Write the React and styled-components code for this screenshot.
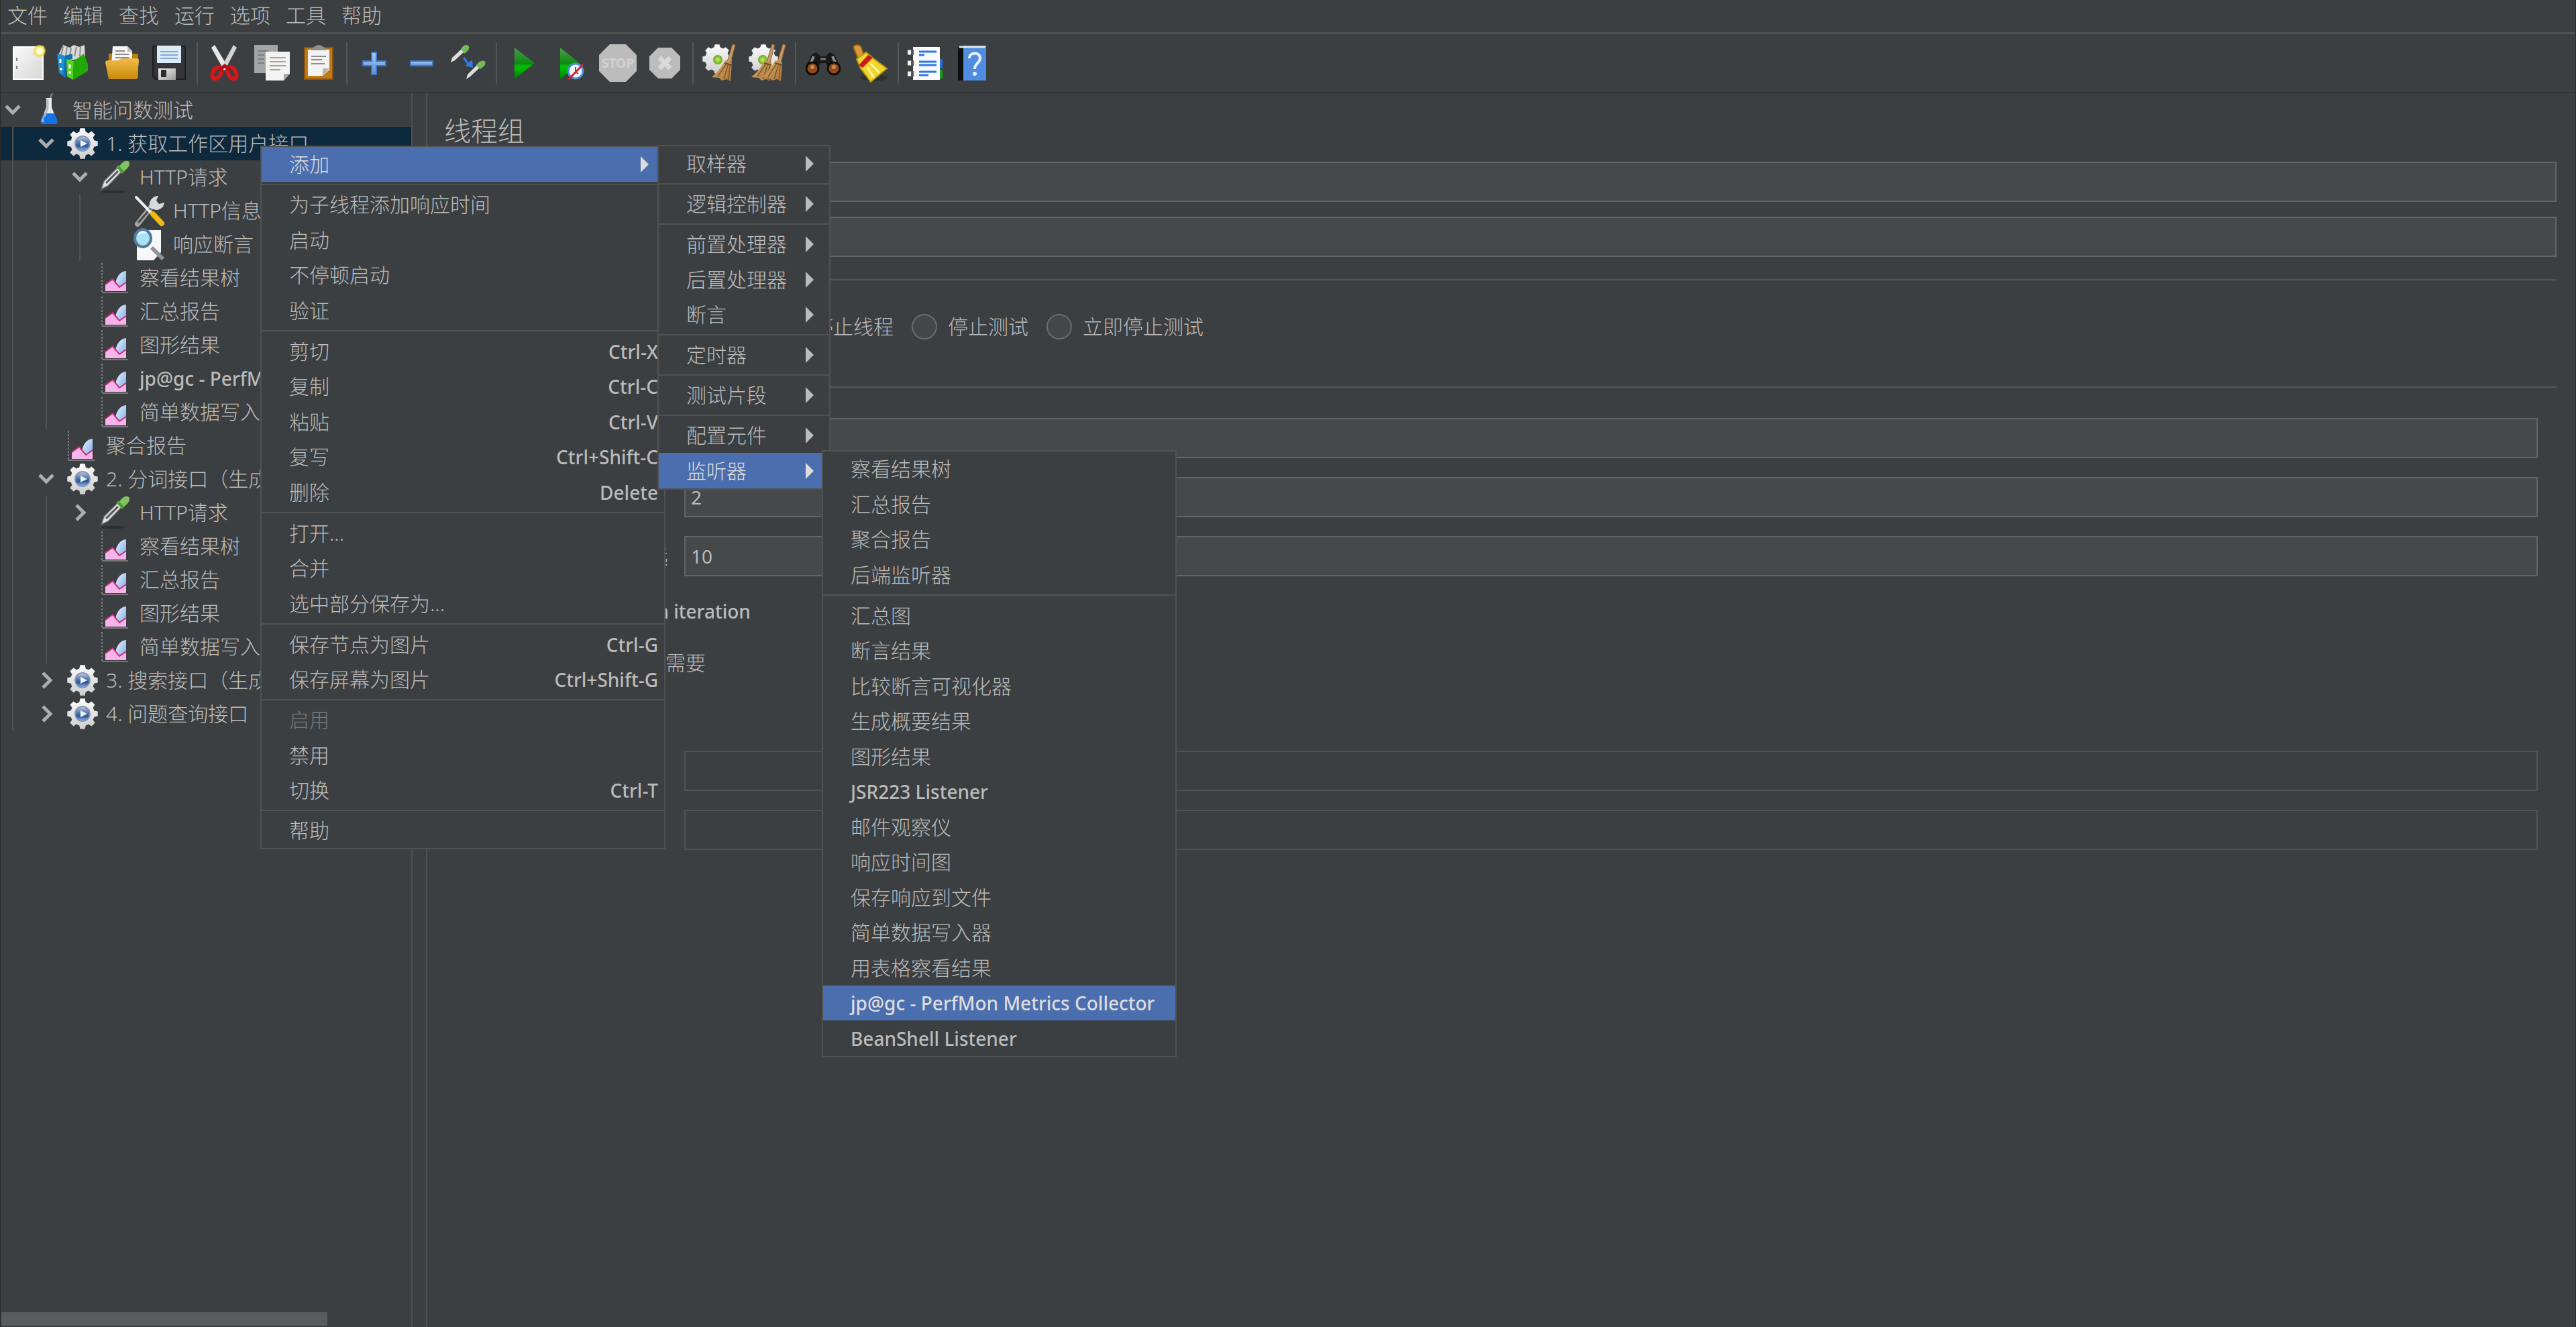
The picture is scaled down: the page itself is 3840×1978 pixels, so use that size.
// App.jsx
import React, { useState } from 'react';
import styled, { createGlobalStyle, css } from 'styled-components';

const GlobalStyle = createGlobalStyle`
  * {
    box-sizing: border-box;
  }

  body {
    margin: 0;
    background: #3c3f41;
    color: #bbbbbb;
    font-family: 'Noto Sans', 'Noto Sans CJK SC', sans-serif;
    font-size: 30px;
    font-weight: 300;
    line-height: 40px;
  }

  button,
  input {
    font: inherit;
    color: inherit;
  }

  button {
    padding: 0;
    border: 0;
    background: none;
  }
`;

const Window = styled.div`
  position: relative;
  display: flex;
  flex-direction: column;
  min-height: 100vh;
  overflow: hidden;
  border: solid #2b2b2b;
  border-width: 0 1px;
`;

// Latin-only labels are set a little smaller and heavier than the Chinese ones
const Label = styled.span`
  ${({ $latin }) =>
    $latin &&
    css`
      font-size: 28px;
      font-weight: 500;
    `}
`;

const isLatin = (text) => /^[\x20-\x7e]+$/.test(text);

/* ---------- menu bar and toolbar ---------- */

const MenuBar = styled.nav`
  display: flex;
  gap: 23px;
  height: 51px;
  padding: 2px 10px 0;
  border-bottom: 3px solid #515151;
`;

const MenuBarButton = styled.button`
  height: 42px;
`;

const ToolBar = styled.div`
  display: flex;
  align-items: center;
  height: 88px;
  padding-left: 6px;
  border-bottom: 2px solid #333638;
`;

const ToolButton = styled.button`
  display: flex;
  align-items: center;
  justify-content: center;
  width: 70px;
  height: 64px;
`;

const ToolDivider = styled.span`
  width: 2px;
  height: 63px;
  margin: 0 5px 0 6px;
  background: #555555;
`;

const Glyph = styled.svg`
  display: block;
  flex: none;
  width: ${({ $size }) => $size || 56}px;
  height: ${({ $size }) => $size || 56}px;
  overflow: visible;
`;

/* ---------- tree ---------- */

const Body = styled.div`
  display: flex;
  flex: 1;
`;

const Sidebar = styled.aside`
  display: flex;
  flex-direction: column;
  flex: none;
  width: 614px;
  overflow: hidden;
  border-right: 2px solid #515151;
`;

const Tree = styled.ul`
  flex: 1;
  margin: 0;
  padding: 0;
  list-style: none;
`;

const TreeRow = styled.li`
  display: flex;
  align-items: center;
  height: 50px;
  white-space: nowrap;
  background: ${({ $selected }) => ($selected ? '#0d293e' : 'transparent')};
`;

const Guide = styled.span`
  flex: none;
  width: 50px;
  height: 50px;

  &::before {
    content: '';
    display: block;
    width: 2px;
    height: 100%;
    margin-left: 17px;
    background: #515151;
  }
`;

const Twisty = styled.button`
  display: flex;
  align-items: center;
  justify-content: center;
  flex: none;
  width: 36px;
  height: 50px;
`;

const TreeIcon = styled.span`
  flex: none;
  margin: 0 10px 0 11px;
`;

const ScrollThumb = styled.div`
  width: 486px;
  height: 20px;
  margin: 2px 1px;
  background: #595b5d;
`;

/* ---------- editor panel ---------- */

const Panel = styled.main`
  flex: 1;
  margin-left: 20px;
  padding: 26px 28px 0 25px;
  border-left: 2px solid #515151;
`;

const Title = styled.h1`
  margin: 0 0 16px;
  font-size: 40px;
  font-weight: 300;
  line-height: 60px;
`;

const Row = styled.div`
  display: flex;
  align-items: center;
  margin-bottom: ${({ $gap }) => $gap || 28}px;
`;

const RowLabel = styled.div`
  display: flex;
  align-items: center;
  justify-content: space-between;
  flex: none;
  width: ${({ $wide }) => ($wide ? 330 : 110)}px;
  padding-right: ${({ $wide }) => ($wide ? 24 : 0)}px;
`;

const Field = styled.input`
  flex: 1;
  min-width: 0;
  height: 60px;
  padding: 0 8px;
  border: 2px solid #646464;
  border-radius: 0;
  outline: 0;
  background: #45494a;
  font-size: 28px;
  font-weight: 400;

  &:disabled {
    border-color: #515151;
    background: transparent;
  }
`;

const Section = styled.section`
  padding-bottom: ${({ $space }) => $space || 0}px;
`;

const SectionTitle = styled.h2`
  display: flex;
  align-items: center;
  gap: 8px;
  margin: 0 0 25px;
  font-size: 30px;
  font-weight: 300;
  line-height: 40px;

  &::after {
    content: '';
    flex: 1;
    height: 2px;
    background: #555555;
  }
`;

const Properties = styled.div`
  padding: 1px 28px 0;
`;

const Radios = styled.div`
  display: flex;
  gap: 27px;
  height: 50px;
  padding-left: 34px;
`;

const Choice = styled.label`
  display: flex;
  align-items: center;
  gap: ${({ $tight }) => ($tight ? 8 : 16)}px;
`;

const Radio = styled.input`
  appearance: none;
  width: 38px;
  height: 38px;
  margin: 0;
  border: 2px solid #6b6b6b;
  border-radius: 50%;
  background: #43494a;
`;

const CheckBox = styled.input`
  appearance: none;
  width: 38px;
  height: 38px;
  margin: 0;
  border: 2px solid #6b6b6b;
  background: #43494a;

  &:checked {
    background: #6b6b6b;
  }
`;

const Options = styled.div`
  padding-left: 8px;
`;

/* ---------- popup menus ---------- */

const Popup = styled.div`
  position: absolute;
  top: ${({ $top }) => $top}px;
  left: ${({ $left }) => $left}px;
  width: ${({ $width }) => $width}px;
  border: 2px solid #515151;
  background: #3c3f41;
`;

const PopupItem = styled.button`
  display: flex;
  align-items: center;
  justify-content: space-between;
  width: 100%;
  height: 52px;
  padding: 0 9px 0 41px;
  text-align: left;
  white-space: nowrap;

  &:nth-child(even) {
    height: 53px;
  }

  &:disabled {
    color: #777777;
  }

  ${({ $active }) =>
    $active &&
    css`
      background: #4b6eaf;
      color: #dddddd;
    `}
`;

const PopupDivider = styled.div`
  height: 8px;
  padding: 3px 0;
  background: #515151 content-box;
`;

const Arrow = styled.span`
  margin-right: 14px;
  border-left: 12px solid currentColor;
  border-top: 12px solid transparent;
  border-bottom: 12px solid transparent;
`;

/* ---------- drawings ---------- */

const Gradients = () => (
  <svg width="0" height="0" style={{ position: 'absolute' }} aria-hidden="true">
    <defs>
      <linearGradient id="paper" x1="0" y1="0" x2="1" y2="1">
        <stop offset="0" stopColor="#fafafa" />
        <stop offset="1" stopColor="#d6d6d6" />
      </linearGradient>
      <linearGradient id="folder" x1="0" y1="0" x2="0" y2="1">
        <stop offset="0" stopColor="#f0bb4c" />
        <stop offset="1" stopColor="#c98a08" />
      </linearGradient>
      <linearGradient id="metal" x1="0" y1="0" x2="1" y2="1">
        <stop offset="0" stopColor="#f4f4f4" />
        <stop offset="1" stopColor="#9a9a9a" />
      </linearGradient>
      <linearGradient id="cog" x1="0" y1="0" x2="0" y2="1">
        <stop offset="0" stopColor="#fbfbfb" />
        <stop offset="1" stopColor="#cdcdcd" />
      </linearGradient>
      <linearGradient id="play" x1="0" y1="0" x2="0" y2="1">
        <stop offset="0" stopColor="#4b9e4b" />
        <stop offset="0.5" stopColor="#0c8a10" />
        <stop offset="0.6" stopColor="#00c400" />
        <stop offset="1" stopColor="#007a08" />
      </linearGradient>
      <linearGradient id="sky" x1="0" y1="0" x2="1" y2="1">
        <stop offset="0" stopColor="#f4f9ff" />
        <stop offset="1" stopColor="#6ea3e8" />
      </linearGradient>
      <linearGradient id="plus" x1="0" y1="0" x2="0" y2="1">
        <stop offset="0" stopColor="#a9c9f2" />
        <stop offset="1" stopColor="#5b93dc" />
      </linearGradient>
      <linearGradient id="straw" x1="0" y1="0" x2="1" y2="1">
        <stop offset="0" stopColor="#d6ac73" />
        <stop offset="1" stopColor="#a87435" />
      </linearGradient>
      <radialGradient id="glow">
        <stop offset="0" stopColor="#ffffff" />
        <stop offset="0.5" stopColor="#fff9b0" />
        <stop offset="0.7" stopColor="#f2dc3c" />
        <stop offset="1" stopColor="#f2dc3c" stopOpacity="0" />
      </radialGradient>
      <linearGradient id="orb" x1="0" y1="0" x2="0" y2="1">
        <stop offset="0" stopColor="#c3cbd8" />
        <stop offset="0.4" stopColor="#5b7db4" />
        <stop offset="0.65" stopColor="#2c5296" />
        <stop offset="1" stopColor="#8fbaf0" />
      </linearGradient>
      <radialGradient id="lime">
        <stop offset="0" stopColor="#c8f06a" />
        <stop offset="1" stopColor="#6aa51c" />
      </radialGradient>
    </defs>
  </svg>
);

const cog = (cx, cy, inner, outer) => {
  const points = [];
  for (let i = 0; i < 8; i++) {
    [-15, -9, 9, 15].forEach((offset, k) => {
      const angle = ((i * 45 + offset) * Math.PI) / 180;
      const r = k === 0 || k === 3 ? inner : outer;
      points.push(`${(cx + r * Math.sin(angle)).toFixed(1)},${(cy - r * Math.cos(angle)).toFixed(1)}`);
    });
  }
  return points.join(' ');
};

const Dropper = () => (
  <g>
    <path d="M2 42L6 30L27 9L33 15L12 37Z" fill="#e4e4e4" stroke="#6f6f6f" strokeWidth="1.5" />
    <path d="M9 33L27 15" stroke="#555" strokeWidth="3" />
    <path d="M24 9L28 6L37 15L33 19Z" fill="#4f9e3e" />
    <path d="M29 8C33 1 40 -2 43 1C46 5 42 11 36 15Z" fill="#7cc45e" />
  </g>
);

const Broom = () => (
  <g>
    <path d="M46 0L50 1L43 27L38 26Z" fill="#c49a66" stroke="#8f6636" />
    <path d="M35 24L45 27L43 55L37 52L30 54L26 50L15 49C23 42 29 35 35 24Z" fill="url(#straw)" />
    <path d="M36 30L24 48M39 31L33 52M42 31L40 53" stroke="#855a26" strokeWidth="1.5" />
    <path d="M34 28L45 31" stroke="#6e4a1e" strokeWidth="2" />
  </g>
);

const toolIcons = {
  new: (
    <>
      <rect x="6" y="4" width="44" height="48" fill="url(#paper)" stroke="#fff" strokeWidth="2" />
      <path d="M11 20v5M11 32v5" stroke="#777" strokeWidth="2" />
      <circle cx="45" cy="10" r="10" fill="url(#glow)" />
    </>
  ),
  templates: (
    <>
      <path d="M4 14L10 1L20 5L26 1L34 4L42 1L43 20L20 24L6 24Z" fill="#d9d9d9" />
      <path d="M10 3L7 18M16 4L14 18M22 5L20 18M30 4L27 18M36 3L35 18" stroke="#8b8b8b" strokeWidth="2" />
      <path d="M1 14L13 17V50L4 42Z" fill="#1b8fd6" />
      <path d="M13 17L24 14V22L15 24V50L10 47Z" fill="#0c6fb4" />
      <path d="M15 22L26 25L25 53L16 48Z" fill="#55d321" />
      <path d="M26 25L41 14L47 30V40L25 53Z" fill="#22a907" />
      <path d="M6 22v6M20 30v6" stroke="#fff" strokeWidth="3" />
      <circle cx="7" cy="37" r="2" fill="#fff" />
      <circle cx="20" cy="42" r="2" fill="#fff" />
    </>
  ),
  open: (
    <>
      <path d="M8 14h44v36H8z" fill="#b97f08" />
      <path d="M14 3h22l7 7v20H12z" fill="#f6f6f6" />
      <path d="M36 3v8h7z" fill="#bdbdbd" />
      <path d="M18 10h14M18 15h20M18 20h20" stroke="#8e8e8e" strokeWidth="2" />
      <path d="M3 27C3 25 5 24 8 24H22L27 21H50C53 21 53 23 53 26L50 52H8Z" fill="url(#folder)" />
    </>
  ),
  save: (
    <>
      <path d="M4 3h48v49H8L4 48z" fill="#34343a" stroke="#1e1e22" strokeWidth="2" />
      <rect x="10" y="2" width="36" height="26" fill="#dcebf8" />
      <path d="M15 11h26M15 16h26M15 21h26" stroke="#86a9cc" strokeWidth="2" />
      <rect x="12" y="36" width="26" height="17" fill="url(#metal)" />
      <rect x="16" y="38" width="8" height="11" fill="#2c2c30" />
    </>
  ),
  cut: (
    <>
      <path d="M8 5L13 1L33 34L27 39Z" fill="#e9e9e9" />
      <path d="M46 5L41 1L23 34L28 39Z" fill="#d3d3d3" />
      <g fill="none" stroke="#d81518" strokeWidth="6">
        <ellipse cx="16" cy="43" rx="6" ry="9" transform="rotate(25 16 43)" />
        <ellipse cx="39" cy="43" rx="6" ry="9" transform="rotate(-25 39 43)" />
      </g>
      <path d="M20 38L28 32L36 38" fill="none" stroke="#b01010" strokeWidth="5" />
    </>
  ),
  copy: (
    <>
      <rect x="2" y="1" width="35" height="42" fill="#a2a5a5" />
      <path d="M7 10h16M7 16h10M7 22h10M7 28h10" stroke="#7b7e7e" strokeWidth="2" />
      <path d="M19 11H55V44L46 54H19Z" fill="#f3f3f1" />
      <path d="M55 44H46V54Z" fill="#a9aba6" />
      <path d="M25 20h24M25 26h24M25 32h24M25 38h16" stroke="#a4a4a4" strokeWidth="2" />
    </>
  ),
  paste: (
    <>
      <rect x="7" y="5" width="42" height="47" fill="#c07a16" stroke="#8a550b" strokeWidth="2" />
      <path d="M12 8H44V38L34 47H12Z" fill="#f3f3f1" />
      <path d="M44 36H34V47Z" fill="#b6b6b0" />
      <path d="M17 9V6C20 6 21 2 28 1C35 2 36 6 39 6V9Z" fill="#8f9189" />
      <path d="M17 18h22M17 23h16M17 29h20" stroke="#8d8d8d" strokeWidth="2" />
    </>
  ),
  expand: (
    <path
      d="M24 12h7v13h14v7H31v13h-7V32H11v-7h13z"
      fill="url(#plus)"
      stroke="#3f78c8"
      strokeWidth="2"
    />
  ),
  collapse: <path d="M12 25h33v7H12z" fill="url(#plus)" stroke="#3f78c8" strokeWidth="2" />,
  toggle: (
    <>
      <path d="M2 27L4 20L18 7L22 11L8 24Z" fill="#dedede" />
      <path d="M17 7C21 0 27 0 29 3C30 7 27 11 22 14Z" fill="#74b95a" />
      <path d="M25 52L27 45L41 31L45 35L31 48Z" fill="#dedede" />
      <path d="M40 31C44 24 51 23 53 26C55 30 51 34 45 37Z" fill="#74b95a" />
      <path d="M21 20L28 29" stroke="#2f7df0" strokeWidth="3" />
      <path d="M24 32L34 23L35 35Z" fill="#2f7df0" />
    </>
  ),
  start: <path d="M14 5L44 28L14 52Z" fill="url(#play)" />,
  startNoTimers: (
    <>
      <path d="M12 5L41 28L12 52Z" fill="url(#play)" />
      <circle cx="35" cy="40" r="11" fill="#f3f8fd" stroke="#4b8fd6" strokeWidth="3" />
      <path d="M35 34v7l4 3" fill="none" stroke="#556" strokeWidth="2" />
      <path d="M24 53L46 30" stroke="#d3202a" strokeWidth="3" />
    </>
  ),
  stop: (
    <>
      <path d="M16 0H40L56 16V40L40 56H16L0 40V16Z" fill="#bcbcbc" />
      <text x="28" y="35" textAnchor="middle" fontSize="19" fontWeight="700" fill="#d2d2d2">
        STOP
      </text>
    </>
  ),
  shutdown: (
    <>
      <path d="M18 5H38L51 18V38L38 51H18L5 38V18Z" fill="#bcbcbc" />
      <path d="M20 20L36 36M36 20L20 36" stroke="#dadada" strokeWidth="7" />
    </>
  ),
  clear: (
    <>
      <polygon points={cog(23, 22, 18, 22)} fill="url(#cog)" />
      <circle cx="24" cy="23" r="7" fill="url(#lime)" />
      <Broom />
    </>
  ),
  clearAll: (
    <>
      <polygon points={cog(22, 22, 18, 22)} fill="url(#cog)" />
      <circle cx="21" cy="23" r="7" fill="url(#lime)" />
      <g transform="translate(-11 0)">
        <Broom />
      </g>
      <g transform="translate(5 0)">
        <Broom />
      </g>
    </>
  ),
  search: (
    <>
      <path d="M11 15L18 12L24 18H32L38 12L45 15L54 36L40 42L32 28H24L16 42L2 36Z" fill="#191919" />
      <path d="M14 18L8 32M42 18L48 32" stroke="#8d8d8d" strokeWidth="4" />
      <path d="M24 22h8" stroke="#777" strokeWidth="3" />
      <circle cx="12" cy="36" r="9" fill="#8e4a1c" stroke="#0e0e0e" strokeWidth="3" />
      <circle cx="44" cy="36" r="9" fill="#8e4a1c" stroke="#0e0e0e" strokeWidth="3" />
      <circle cx="12" cy="34" r="3" fill="#d28a4a" />
      <circle cx="44" cy="34" r="3" fill="#d28a4a" />
    </>
  ),
  searchReset: (
    <>
      <ellipse cx="34" cy="50" rx="20" ry="5" fill="#2c2e30" />
      <path d="M3 5C3 0 13 -1 15 5L20 19L11 24Z" fill="#d89a3c" stroke="#8d5d15" strokeWidth="2" />
      <path d="M8 22L22 12L34 22L53 36L29 56L14 36Z" fill="#f1d62d" stroke="#b99a10" strokeWidth="2" />
      <path d="M11 31L25 16L32 20L17 35Z" fill="#cf1a1a" />
      <path d="M24 34L34 50M29 29L42 43" stroke="#fff39a" strokeWidth="3" />
    </>
  ),
  functions: (
    <>
      <rect x="44" y="22" width="9" height="14" fill="#1f6fe8" />
      <rect x="44" y="38" width="9" height="13" fill="#12a018" />
      <rect x="9" y="4" width="40" height="49" fill="#fafafa" />
      <path d="M1 12h14M1 28h14M1 44h14" stroke="#f4f4f4" strokeWidth="7" />
      <path d="M8 8v8M8 24v8M8 40v8" stroke="#555" strokeWidth="4" />
      <path d="M18 11h26M18 16h8M18 26h26M18 31h26M18 41h26M18 46h14" stroke="#2b78f0" strokeWidth="3" />
    </>
  ),
  help: (
    <>
      <path d="M6 5L14 2V54H6Z" fill="#0e0e0e" />
      <rect x="14" y="2" width="34" height="52" fill="#4f8de0" />
      <path d="M8 4H47" stroke="#e6e6e6" strokeWidth="3" />
      <path
        d="M23 21C23 11 39 11 39 21C39 28 31 28 31 37"
        fill="none"
        stroke="#eaf2ff"
        strokeWidth="4"
      />
      <circle cx="31" cy="44" r="3" fill="#eaf2ff" />
    </>
  ),
};

const treeIcons = {
  plan: (
    <>
      <path d="M25 9L29 -1" stroke="#8c8c8c" strokeWidth="2" />
      <path d="M20 6H28V20L36 40C37 43 35 45 32 45H16C13 45 11 43 12 40L20 20Z" fill="#e8ebee" />
      <path d="M16 29H32L36 40C37 43 35 45 32 45H16C13 45 11 43 12 40Z" fill="#1273e6" />
      <path d="M22 8V22L17 34" fill="none" stroke="#b5b9bd" strokeWidth="3" />
      <path d="M16 43L13 40L16 32Z" fill="#9cc8ff" />
    </>
  ),
  group: (
    <>
      <polygon points={cog(24, 24, 18, 23)} fill="url(#cog)" />
      <circle cx="24" cy="24" r="11" fill="url(#orb)" stroke="#8797b5" strokeWidth="2" />
      <path d="M21 19L31 24L21 29Z" fill="#eef4ff" />
    </>
  ),
  sampler: (
    <>
      <ellipse cx="20" cy="46" rx="18" ry="2" fill="#2c2e30" />
      <Dropper />
    </>
  ),
  config: (
    <>
      <path d="M6 44L26 19" stroke="#a3a3a3" strokeWidth="8" strokeLinecap="round" />
      <path d="M7 42L26 20" stroke="#4a4a4a" strokeWidth="3" />
      <path d="M24 20C22 10 28 2 37 2L34 9L38 14L46 12C45 20 38 25 30 22Z" fill="#d8d8d8" />
      <path d="M4 4L28 29" stroke="#eeeeee" strokeWidth="4" strokeLinecap="round" />
      <path d="M29 29L42 43" stroke="#f0b90c" strokeWidth="8" strokeLinecap="round" />
    </>
  ),
  assertion: (
    <>
      <path d="M5 3H41V36L30 48H5Z" fill="#f7f7f7" />
      <path d="M27 29L44 46" stroke="#8f9499" strokeWidth="6" />
      <ellipse cx="14" cy="15" rx="12" ry="13" fill="#a8e2f4" stroke="#51799c" strokeWidth="4" />
      <path d="M8 10C10 6 14 5 18 7" fill="none" stroke="#f0fbff" strokeWidth="3" />
    </>
  ),
  listener: (
    <>
      <path d="M3 2V46" stroke="#77797b" strokeWidth="2" strokeDasharray="3 2" />
      <path d="M3 46H42" stroke="#77797b" strokeWidth="2" />
      <path d="M22 44C22 26 28 15 39 14V44Z" fill="url(#sky)" />
      <path d="M8 44V34L19 26L29 38L39 32V44Z" fill="#f7b4ea" />
      <path d="M8 34L19 26L29 38L39 31" fill="none" stroke="#c92a78" strokeWidth="2" />
    </>
  ),
};

/* ---------- data ---------- */

const menuBar = ['文件', '编辑', '查找', '运行', '选项', '工具', '帮助'];

const toolGroups = [
  [
    ['new', '新建'],
    ['templates', '模板'],
    ['open', '打开'],
    ['save', '保存'],
  ],
  [
    ['cut', '剪切'],
    ['copy', '复制'],
    ['paste', '粘贴'],
  ],
  [
    ['expand', '全部展开'],
    ['collapse', '全部折叠'],
    ['toggle', '切换'],
  ],
  [
    ['start', '启动'],
    ['startNoTimers', '不停顿启动'],
    ['stop', '停止'],
    ['shutdown', '关闭'],
  ],
  [
    ['clear', '清除'],
    ['clearAll', '清除全部'],
  ],
  [
    ['search', '查找'],
    ['searchReset', '重置搜索'],
  ],
  [
    ['functions', '函数助手'],
    ['help', '帮助'],
  ],
];

const tree = [
  { depth: 0, icon: 'plan', text: '智能问数测试', open: true },
  { depth: 1, icon: 'group', text: '1. 获取工作区用户接口', open: true, selected: true },
  { depth: 2, icon: 'sampler', text: 'HTTP请求', open: true },
  { depth: 3, icon: 'config', text: 'HTTP信息头管理器' },
  { depth: 3, icon: 'assertion', text: '响应断言' },
  { depth: 2, icon: 'listener', text: '察看结果树' },
  { depth: 2, icon: 'listener', text: '汇总报告' },
  { depth: 2, icon: 'listener', text: '图形结果' },
  { depth: 2, icon: 'listener', text: 'jp@gc - PerfMon Metrics Collector' },
  { depth: 2, icon: 'listener', text: '简单数据写入器' },
  { depth: 1, icon: 'listener', text: '聚合报告' },
  { depth: 1, icon: 'group', text: '2. 分词接口（生成）', open: true },
  { depth: 2, icon: 'sampler', text: 'HTTP请求', open: false },
  { depth: 2, icon: 'listener', text: '察看结果树' },
  { depth: 2, icon: 'listener', text: '汇总报告' },
  { depth: 2, icon: 'listener', text: '图形结果' },
  { depth: 2, icon: 'listener', text: '简单数据写入器' },
  { depth: 1, icon: 'group', text: '3. 搜索接口（生成）', open: false },
  { depth: 1, icon: 'group', text: '4. 问题查询接口（生成）', open: false },
];

// null draws a separator
const contextMenu = [
  { text: '添加', sub: true, active: true },
  null,
  { text: '为子线程添加响应时间' },
  { text: '启动' },
  { text: '不停顿启动' },
  { text: '验证' },
  null,
  { text: '剪切', keys: 'Ctrl-X' },
  { text: '复制', keys: 'Ctrl-C' },
  { text: '粘贴', keys: 'Ctrl-V' },
  { text: '复写', keys: 'Ctrl+Shift-C' },
  { text: '删除', keys: 'Delete' },
  null,
  { text: '打开...' },
  { text: '合并' },
  { text: '选中部分保存为...' },
  null,
  { text: '保存节点为图片', keys: 'Ctrl-G' },
  { text: '保存屏幕为图片', keys: 'Ctrl+Shift-G' },
  null,
  { text: '启用', disabled: true },
  { text: '禁用' },
  { text: '切换', keys: 'Ctrl-T' },
  null,
  { text: '帮助' },
];

const addMenu = [
  { text: '取样器', sub: true },
  null,
  { text: '逻辑控制器', sub: true },
  null,
  { text: '前置处理器', sub: true },
  { text: '后置处理器', sub: true },
  { text: '断言', sub: true },
  null,
  { text: '定时器', sub: true },
  null,
  { text: '测试片段', sub: true },
  null,
  { text: '配置元件', sub: true },
  { text: '监听器', sub: true, active: true },
];

const listenerMenu = [
  { text: '察看结果树' },
  { text: '汇总报告' },
  { text: '聚合报告' },
  { text: '后端监听器' },
  null,
  { text: '汇总图' },
  { text: '断言结果' },
  { text: '比较断言可视化器' },
  { text: '生成概要结果' },
  { text: '图形结果' },
  { text: 'JSR223 Listener' },
  { text: '邮件观察仪' },
  { text: '响应时间图' },
  { text: '保存响应到文件' },
  { text: '简单数据写入器' },
  { text: '用表格察看结果' },
  { text: 'jp@gc - PerfMon Metrics Collector', active: true },
  { text: 'BeanShell Listener' },
];

const errorActions = ['继续', '启动下一进程循环', '停止线程', '停止测试', '立即停止测试'];

/* ---------- components ---------- */

const Chevron = ({ open }) => (
  <Glyph $size={24} viewBox="0 0 24 24">
    <path
      d={open ? 'M2 6L12 16L22 6' : 'M7 1L18 12L7 23'}
      fill="none"
      stroke="#adadad"
      strokeWidth="5"
    />
  </Glyph>
);

const TreeNode = ({ depth, icon, text, open, selected }) => (
  <TreeRow $selected={selected}>
    {Array.from({ length: depth }, (_, i) => (
      <Guide key={i} />
    ))}
    <Twisty aria-label={text} disabled={open === undefined}>
      {open !== undefined && <Chevron open={open} />}
    </Twisty>
    <TreeIcon>
      <Glyph $size={50} viewBox="-1 -1 50 50">
        {treeIcons[icon]}
      </Glyph>
    </TreeIcon>
    <Label $latin={isLatin(text)}>{text}</Label>
  </TreeRow>
);

const PopupMenu = ({ items, ...place }) => (
  <Popup role="menu" {...place}>
    {items.map((item, i) =>
      item ? (
        <PopupItem key={i} role="menuitem" $active={item.active} disabled={item.disabled}>
          <Label $latin={isLatin(item.text)}>{item.text}</Label>
          {item.keys && <Label $latin>{item.keys}</Label>}
          {item.sub && <Arrow />}
        </PopupItem>
      ) : (
        <PopupDivider key={i} />
      )
    )}
  </Popup>
);

const ThreadGroupPanel = () => {
  const [action, setAction] = useState('继续');

  return (
    <Panel>
      <Title>线程组</Title>
      <Row $gap={22}>
        <RowLabel>
          <label htmlFor="name">名称：</label>
        </RowLabel>
        <Field id="name" defaultValue="1. 获取工作区用户接口" />
      </Row>
      <Row $gap={14}>
        <RowLabel>
          <label htmlFor="comments">注释：</label>
        </RowLabel>
        <Field id="comments" />
      </Row>
      <Section $space={45}>
        <SectionTitle>在取样器错误后要执行的动作</SectionTitle>
        <Radios>
          {errorActions.map((label) => (
            <Choice key={label}>
              <Radio
                type="radio"
                name="action"
                checked={action === label}
                onChange={() => setAction(label)}
              />
              {label}
            </Choice>
          ))}
        </Radios>
      </Section>
      <Section>
        <SectionTitle>线程属性</SectionTitle>
        <Properties>
          <Row>
            <RowLabel $wide>
              <label htmlFor="threads">线程数：</label>
            </RowLabel>
            <Field id="threads" defaultValue="1" />
          </Row>
          <Row>
            <RowLabel $wide>
              <label htmlFor="ramp">Ramp-Up时间：</label>
            </RowLabel>
            <Field id="ramp" defaultValue="2" />
          </Row>
          <Row $gap={32}>
            <RowLabel $wide>
              <label htmlFor="loops">循环次数</label>
              <Choice $tight>
                <CheckBox type="checkbox" />
                永远
              </Choice>
            </RowLabel>
            <Field id="loops" defaultValue="10" />
          </Row>
          <Options>
            <Row $gap={37}>
              <Choice $tight>
                <CheckBox type="checkbox" defaultChecked />
                <Label $latin>Same user on each iteration</Label>
              </Choice>
            </Row>
            <Row $gap={37}>
              <Choice>
                <CheckBox type="checkbox" />
                延迟创建线程直到需要
              </Choice>
            </Row>
            <Row $gap={34}>
              <Choice>
                <CheckBox type="checkbox" />
                调度器
              </Choice>
            </Row>
          </Options>
          <Row>
            <RowLabel $wide>
              <label htmlFor="duration">持续时间（秒）</label>
            </RowLabel>
            <Field id="duration" disabled />
          </Row>
          <Row>
            <RowLabel $wide>
              <label htmlFor="delay">启动延迟（秒）</label>
            </RowLabel>
            <Field id="delay" disabled />
          </Row>
        </Properties>
      </Section>
    </Panel>
  );
};

const App = () => (
  <>
    <GlobalStyle />
    <Window>
      <Gradients />
      <MenuBar>
        {menuBar.map((text) => (
          <MenuBarButton key={text}>{text}</MenuBarButton>
        ))}
      </MenuBar>
      <ToolBar>
        {toolGroups.map((group, i) => (
          <React.Fragment key={i}>
            {i > 0 && <ToolDivider />}
            {group.map(([icon, label]) => (
              <ToolButton key={icon} aria-label={label}>
                <Glyph viewBox="0 0 56 56">{toolIcons[icon]}</Glyph>
              </ToolButton>
            ))}
          </React.Fragment>
        ))}
      </ToolBar>
      <Body>
        <Sidebar>
          <Tree>
            {tree.map((node, i) => (
              <TreeNode key={i} {...node} />
            ))}
          </Tree>
          <ScrollThumb />
        </Sidebar>
        <ThreadGroupPanel />
      </Body>
      <PopupMenu items={contextMenu} $top={217} $left={387} $width={604} />
      <PopupMenu items={addMenu} $top={216} $left={979} $width={258} />
      <PopupMenu items={listenerMenu} $top={671} $left={1224} $width={529} />
    </Window>
  </>
);

export default App;
